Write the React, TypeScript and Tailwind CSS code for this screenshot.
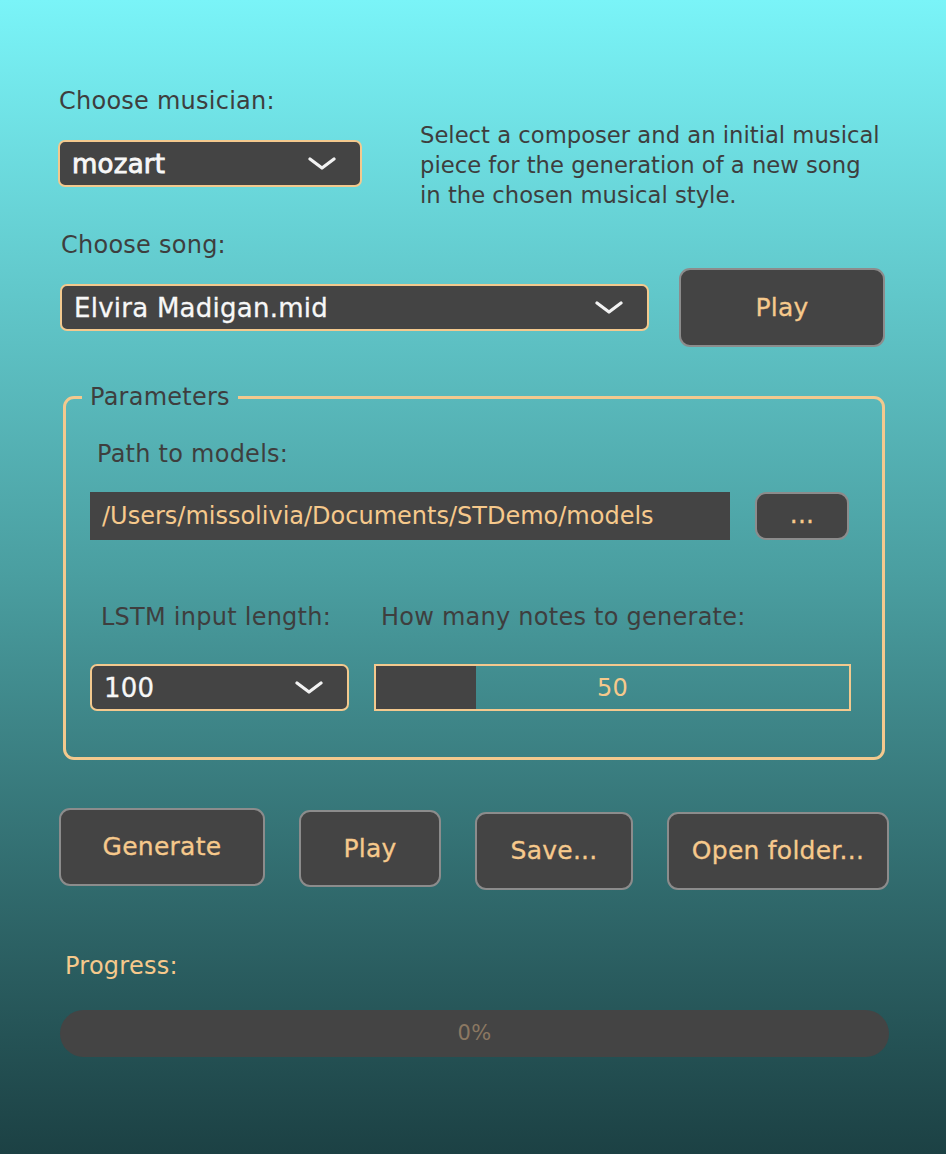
import { ReactNode } from 'react'

const Chevron = () => (
  <svg width="28" height="14" viewBox="0 0 28 14" fill="none">
    <polyline points="2,2 14,11 26,2" stroke="#f2f2f2" strokeWidth="3.2" strokeLinecap="round" strokeLinejoin="round" />
  </svg>
)

const Combo = ({ value, className, heavy }: { value: string; className: string; heavy?: boolean }) => (
  <div
    className={`flex items-center justify-between rounded-[7px] border-2 border-[#f3c98e] bg-[#444444] pl-[12px] pr-[24px] text-[26px] text-[#f7f7f7] ${className}`}
  >
    <span className={`leading-none ${heavy ? '[-webkit-text-stroke:0.9px_#f7f7f7]' : '[-webkit-text-stroke:0.3px_#f7f7f7]'}`}>
      {value}
    </span>
    <Chevron />
  </div>
)

const Button = ({ children, className }: { children: ReactNode; className: string }) => (
  <button
    type="button"
    className={`flex items-center justify-center rounded-[11px] border-2 border-[#8c8c8c] bg-[#444444] text-[25px] text-[#f6c98c] [-webkit-text-stroke:0.3px_#f6c98c] ${className}`}
  >
    {children}
  </button>
)

const App = () => {
  return (
    <div
      className="flex h-[1154px] w-[946px] flex-col bg-gradient-to-b from-[#7af4f8] via-[#4a9ea0] to-[#1c4144] tracking-[0.25px] text-[#3e3e3e]"
      style={{ fontFamily: '"DejaVu Sans", "Liberation Sans", sans-serif' }}
    >
      <div className="flex pt-[86px]">
        <div className="ml-[58px] flex w-[304px] flex-col">
          <div className="ml-[1px] h-[30px] text-[24px] leading-[30px]">Choose musician:</div>
          <Combo value="mozart" heavy className="mt-[24px] h-[47px] w-[304px]" />
        </div>
        <p className="ml-[58px] mt-[34px] w-[466px] text-[22.7px] leading-[30px] tracking-normal">
          Select a composer and an initial musical piece for the generation of a new song in the chosen musical style.
        </p>
      </div>

      <div className="ml-[61px] mt-[20px] h-[30px] text-[24px] leading-[30px]">Choose song:</div>

      <div className="mt-[8px] flex items-center">
        <Combo value="Elvira Madigan.mid" className="ml-[60px] h-[47px] w-[589px]" />
        <Button className="ml-[30px] h-[79px] w-[206px]">Play</Button>
      </div>

      <fieldset className="ml-[63px] mt-[35px] w-[822px] rounded-[11px] border-[3px] border-[#f3c98e]">
        <legend className="ml-[16px] px-[8px] text-[24px] leading-[30px]">Parameters</legend>
        <div className="pb-[46px] pl-[24px]">
          <div className="ml-[7px] mt-[27px] h-[30px] text-[24px] leading-[30px]">Path to models:</div>
          <div className="mt-[23px] flex items-center">
            <div className="flex h-[48px] w-[640px] items-center bg-[#444444] pl-[12px] text-[24px] tracking-normal text-[#f6c98c]">
              /Users/missolivia/Documents/STDemo/models
            </div>
            <Button className="ml-[25px] h-[48px] w-[94px] pb-[2px]">...</Button>
          </div>
          <div className="mt-[62px] flex h-[30px] text-[24px] leading-[30px]">
            <span className="ml-[11px] w-[280px]">LSTM input length:</span>
            <span>How many notes to generate:</span>
          </div>
          <div className="mt-[32px] flex items-center">
            <Combo value="100" className="h-[47px] w-[259px]" />
            <div className="relative ml-[25px] flex h-[47px] w-[477px] items-center justify-center border-2 border-[#f3c98e]">
              <div className="absolute left-0 top-0 h-full w-[100px] bg-[#444444]" />
              <span className="relative text-[24px] text-[#f6c98c]">50</span>
            </div>
          </div>
        </div>
      </fieldset>

      <div className="mt-[48px] flex items-start">
        <Button className="ml-[59px] h-[78px] w-[206px]">Generate</Button>
        <Button className="ml-[34px] mt-[2px] h-[77px] w-[142px]">Play</Button>
        <Button className="ml-[34px] mt-[4px] h-[78px] w-[158px]">Save...</Button>
        <Button className="ml-[34px] mt-[4px] h-[78px] w-[222px]">Open folder...</Button>
      </div>

      <div className="ml-[65px] mt-[61px] h-[30px] text-[24px] leading-[30px] text-[#f6c98c]">Progress:</div>

      <div className="ml-[60px] mt-[29px] flex h-[47px] w-[829px] items-center justify-center rounded-full bg-[#444444] text-[21px] text-[#8b7862]">
        0%
      </div>
    </div>
  )
}

export default App
